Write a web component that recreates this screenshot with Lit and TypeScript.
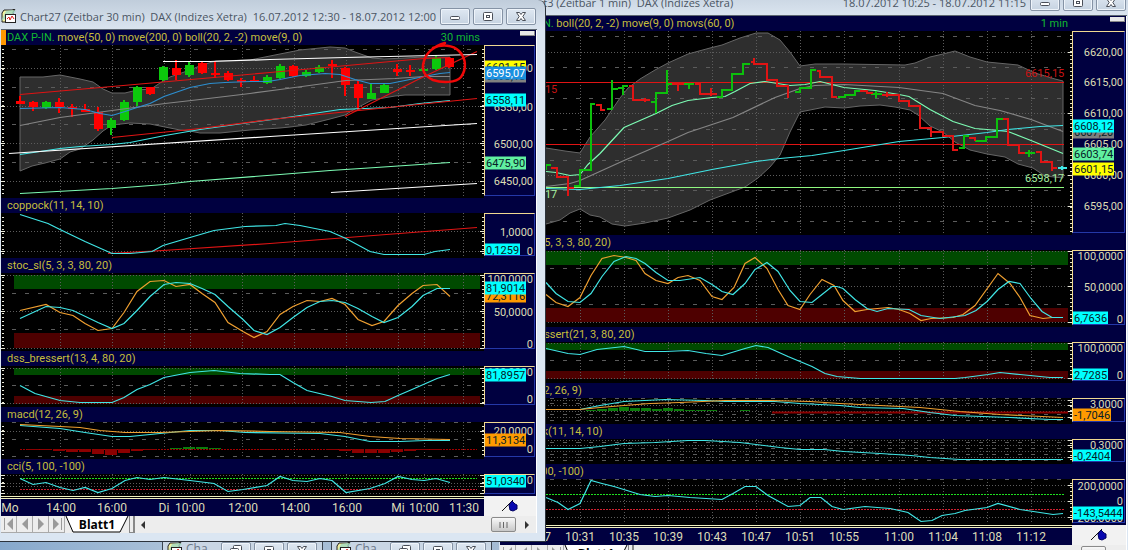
import { LitElement, html, svg, css, nothing } from "lit";
import { customElement, property } from "lit/decorators.js";

interface Line { c: string; p: string; w?: number }
interface Mark { y: number; t: string; c?: string; bg?: string }
interface Panel {
  title: string;
  symbol?: boolean;
  frame?: string;
  top: number;
  height: number;
  dots: number[];
  dashes?: number[];
  bands?: [number, number, string][];
  dotted?: [number, string][];
  area?: string;
  lines: Line[];
  candles?: number[][];
  bars?: Line[];
  hist?: { base: number; w: number; v: [number, number][] };
  rings?: string;
  notes?: { x: number; y: number; t: string; c: string }[];
  marks: Mark[];
}
interface Chart {
  x0: number;
  width: number;
  grid: number[];
  end: number;
  ticks: [number, string][];
  panels: Panel[];
}

const CYAN = "#40e6e6";
const ORANGE = "#f0a030";
const RED = "#e01414";
const GREEN = "#0cc00c";
const GRAY = "#858585";
const MINT = "#7dfcb4";
const TAG_CYAN = "#00ffff";
const TAG_ORANGE = "#ff9a00";

const chart27: Chart = {
  x0: 1,
  width: 483,
  end: 480,
  grid: [60, 112, 164, 190, 242, 294, 346, 398, 424, 463],
  ticks: [[10, "Mo"], [61, "14:00"], [112, "16:00"], [164, "Di"], [190, "10:00"], [243, "12:00"], [295, "14:00"], [347, "16:00"], [398, "Mi"], [424, "10:00"], [464, "11:30"]],
  panels: [
    {
      title: "move(50, 0) move(200, 0) boll(20, 2, -2) move(9, 0)",
      symbol: true,
      frame: "30 mins",
      top: 45,
      height: 153,
      dots: [68, 106, 143, 181],
      dashes: [49, 87, 124, 162],
      area: "20,77 43,77 60,75 80,79 93,82 103,89 112,93 125,93 137,90 151,89 160,83 170,77 190,70 202,65 216,61 250,60 280,54 300,50 330,47 345,48 355,52 372,58 384,59 405,58 424,57 450,57 450,95 420,95 405,95 395,96 372,100 355,109 345,115 330,119 306,125 290,127 280,128 250,130 220,133 200,133 190,131 180,130 165,127 150,124 130,123 112,125 103,131 93,140 80,149 70,152 60,159 45,163 32,166 20,171",
      lines: [
        { c: GRAY, p: "20,125 60,117 112,110 165,103 200,99 250,93 280,89 346,80 395,78 424,76 450,76" },
        { c: "#2d8fd0", p: "20,108 60,107 85,109 100,113 112,115 125,111 137,107 150,103 164,96 190,87 210,83 225,82 250,81 268,81 280,79 300,75 325,73 340,74 355,79 370,83 390,83 405,80 424,76 440,73 450,72" },
        { c: CYAN, p: "20,154 60,148 80,146 112,144 130,142 165,135 200,129 250,122 280,118 340,109 390,107 420,103 450,100" },
        { c: MINT, p: "20,193 112,188 164,184 190,181 280,174 330,170 376,167 450,162" },
        { c: RED, p: "20,94 112,86 270,72 424,58 450,57" },
        { c: RED, p: "112,137 200,128 270,119 477,98" },
        { c: RED, p: "345,116 420,78 477,51" },
        { c: "#fff", p: "163,61 210,61 270,59 345,57 477,54" },
        { c: "#fff", p: "9,153 270,136 477,123" },
        { c: "#fff", p: "331,192 477,183" },
      ],
      candles: [
        [20, 96, 104, 101, 104, 0], [33, 101, 111, 102, 107, 0], [46, 101, 109, 102, 108, 1], [59, 98, 113, 102, 107, 0],
        [72, 104, 117, 107, 109, 0], [85, 104, 112, 109, 112, 0], [98, 107, 131, 112, 129, 0], [111, 118, 135, 120, 128, 1],
        [124, 100, 121, 102, 120, 1], [137, 86, 106, 87, 102, 1], [150, 87, 95, 87, 94, 0], [163, 66, 81, 67, 80, 1],
        [176, 60, 80, 68, 75, 0], [189, 61, 77, 65, 75, 1], [202, 62, 74, 63, 73, 0], [215, 61, 78, 73, 75, 0],
        [228, 71, 81, 73, 80, 0], [241, 78, 87, 80, 82, 0], [254, 76, 82, 80, 82, 0], [267, 75, 84, 77, 83, 1],
        [280, 64, 79, 66, 78, 1], [293, 65, 77, 66, 76, 0], [306, 70, 77, 72, 76, 1], [319, 65, 73, 67, 72, 1],
        [332, 60, 78, 64, 66, 0], [345, 67, 96, 68, 85, 0], [358, 80, 110, 84, 98, 0], [371, 84, 99, 93, 99, 1],
        [384, 84, 93, 85, 93, 1], [397, 64, 76, 69, 72, 0], [410, 65, 76, 70, 72, 0], [423, 67, 71, 69, 71, 1],
        [436, 55, 70, 58, 69, 1], [449, 57, 68, 58, 67, 0],
      ],
      rings: "M445 43 C434 46 426 53 424 61 C421 70 424 76 433 80 C442 83 456 83 461 77 C467 69 466 58 459 51 C453 45 442 44 433 48",
      marks: [
        { y: 68, t: "6600,00" }, { y: 107, t: "6550,00" }, { y: 144, t: "6500,00" }, { y: 181, t: "6450,00" },
        { y: 76, t: "6593,18", bg: "#808080" }, { y: 67, t: "6601,15", bg: "#ffff00" },
        { y: 73, t: "6595,07", bg: "#1a90e0", c: "#fff" }, { y: 100, t: "6558,11", bg: TAG_CYAN }, { y: 163, t: "6475,90", bg: "#60f0a0" },
      ],
    },
    {
      title: "coppock(11, 14, 10)",
      top: 213,
      height: 45,
      dots: [231, 251],
      lines: [
        { c: RED, p: "108,253 163,250 270,243 477,227" },
        { c: CYAN, p: "20,214 48,223 60,229 85,241 112,253 130,253 152,251 163,245 190,237 214,230 245,226 276,225 285,223 300,225 330,231 346,238 370,251 384,254 424,254 435,251 450,249" },
      ],
      marks: [{ y: 232, t: "1,0000" }, { y: 251, t: "0" }, { y: 250, t: "0,1259", bg: TAG_CYAN }],
    },
    {
      title: "stoc_sl(5, 3, 3, 80, 20)",
      top: 273,
      height: 78,
      bands: [[275, 289, "#004a00"], [333, 348, "#4e0000"]],
      dots: [275, 311, 348],
      dashes: [293, 329],
      lines: [
        { c: ORANGE, p: "20,310 46,304 60,312 73,315 85,323 98,330 112,328 124,312 137,291 150,281 164,280 176,286 190,284 202,293 215,302 228,322 243,331 254,337 267,331 280,314 293,306 307,300 320,301 332,298 345,304 358,319 372,325 384,321 398,305 412,293 423,285 437,284 450,296" },
        { c: CYAN, p: "20,318 46,306 60,307 73,310 98,322 112,328 124,323 137,310 150,296 164,284 176,282 190,283 202,288 215,294 228,306 243,319 254,330 267,334 280,327 293,317 307,307 320,301 332,300 345,302 358,308 372,316 384,322 398,317 412,306 423,295 437,288 450,288" },
      ],
      marks: [{ y: 279, t: "100,0000" }, { y: 312, t: "50,0000" }, { y: 344, t: "0" }, { y: 296, t: "72,3116", bg: TAG_ORANGE }, { y: 288, t: "81,9014", bg: TAG_CYAN }],
    },
    {
      title: "dss_bressert(13, 4, 80, 20)",
      top: 366,
      height: 41,
      bands: [[368, 375, "#004a00"], [396, 404, "#4e0000"]],
      dots: [368, 403],
      dashes: [385],
      lines: [{ c: CYAN, p: "20,385 35,393 60,400 80,402 112,402 124,397 137,389 150,384 164,377 190,372 214,370 240,373 270,374 280,374 293,382 307,390 332,396 345,400 371,402 385,401 398,395 412,389 437,378 450,374" }],
      marks: [{ y: 372, t: "100,0000" }, { y: 399, t: "0" }, { y: 375, t: "81,8957", bg: TAG_CYAN }],
    },
    {
      title: "macd(12, 26, 9)",
      top: 422,
      height: 37,
      dots: [431],
      dashes: [422, 439, 456],
      dotted: [[449, "#a00000"]],
      hist: { base: 449, w: 13, v: [[33, 1], [46, 1], [59, 2], [72, 3], [85, 3], [98, 5], [111, 6], [124, 4], [137, 2], [150, 1], [176, -1], [189, -2], [202, -2], [215, -1], [267, 1], [332, 1], [345, 2], [358, 4], [371, 4], [384, 4], [397, 3], [410, 2], [423, 1], [436, 1]] },
      lines: [
        { c: CYAN, p: "20,425 60,428 85,432 112,436 130,436 160,433 190,430 220,430 245,432 320,433 345,436 370,441 400,441 425,440 450,440" },
        { c: ORANGE, p: "20,424 80,427 100,430 125,432 160,432 220,430 270,431 340,432 370,436 400,438 450,439" },
      ],
      marks: [{ y: 431, t: "20,0000" }, { y: 449, t: "0" }, { y: 440, t: "11,3134", bg: TAG_ORANGE }],
    },
    {
      title: "cci(5, 100, -100)",
      top: 474,
      height: 22,
      dots: [475, 483, 486, 493],
      dotted: [[478, "#20e020"], [489, "#d02030"]],
      lines: [{ c: CYAN, p: "20,478 33,484 46,482 60,487 73,490 85,487 98,492 112,488 125,480 137,477 150,479 164,477 190,480 214,483 228,491 243,489 267,485 280,476 293,480 307,481 320,478 332,480 346,492 370,488 385,483 398,476 412,479 424,480 436,478 450,482" }],
      marks: [{ y: 480, t: "0" }, { y: 481, t: "51,0340", bg: TAG_CYAN }],
    },
  ],
};

const chart3: Chart = {
  x0: 500,
  width: 572,
  end: 1068,
  grid: [536, 580, 624, 668, 712, 756, 800, 844, 899, 943, 987, 1031],
  ticks: [[536, "10:27"], [580, "10:31"], [624, "10:35"], [668, "10:39"], [712, "10:43"], [756, "10:47"], [800, "10:51"], [844, "10:55"], [899, "11:00"], [943, "11:04"], [987, "11:08"], [1031, "11:12"]],
  panels: [
    {
      title: "boll(20, 2, -2) move(9, 0) movs(60, 0)",
      symbol: true,
      frame: "1 min",
      top: 31,
      height: 204,
      dots: [52, 113, 175, 206],
      dashes: [36, 67, 98, 129, 160, 190, 221],
      area: "500,150 546,148 565,151 580,153 590,137 605,120 620,98 628,88 640,79 655,70 668,63 688,54 710,48 722,45 740,38 756,33 768,33 780,40 790,52 800,66 815,64 844,64 905,65 915,63 930,57 943,54 955,51 970,57 987,62 1018,65 1035,73 1055,79 1063,81 1063,178 1045,176 1033,168 1018,164 1005,157 987,154 970,150 955,142 943,132 930,126 918,115 910,110 895,107 880,105 860,106 844,108 825,107 810,110 800,112 790,132 780,155 770,167 758,178 745,187 710,200 690,210 668,218 645,223 625,226 612,224 600,217 590,215 580,209 570,213 560,220 546,224 500,226",
      lines: [
        { c: RED, p: "500,82 1064,82" },
        { c: RED, p: "500,144 1064,144" },
        { c: "#90f880", p: "500,187 1064,187" },
        { c: GRAY, p: "546,186 570,183 580,180 624,160 668,141 688,132 733,117 775,97 800,88 815,85 844,84 899,87 943,93 975,105 1000,110 1031,119 1063,131" },
        { c: MINT, p: "546,171 556,172 570,175 580,174 588,164 600,153 612,140 624,127 640,120 656,113 672,105 688,100 712,97 725,96 735,91 750,83 765,81 790,85 805,84 820,81 844,87 875,90 899,94 909,96 930,109 953,121 975,128 987,129 1008,131 1031,140 1063,153" },
        { c: CYAN, p: "546,188 580,189 620,185 668,178 712,169 756,161 780,158 812,155 844,150 899,141 943,137 987,132 1008,129 1040,126 1063,125" },
      ],
      bars: [
        { c: GREEN, p: "M546 170V165H551M574 186H580V170H591V104H595M607 109H612V80M612 89H618M618 88H623M628 86H623V95M651 102H656V113M656 103V93H667V70M667 84H672M684 84H694M689 84V89M717 97H722V90H732V74H743V64H750M795 92H800V88H811V70H816M838 97H845V95H855V91H860M871 94H882M876 91V98M959 148H964V136H969M975 141H986V137H997V119H1003M1025 153H1035M1029 150V157" },
        { c: RED, p: "M551 168H557V177H568V196M568 188H574M596 105H601V110H605M629 86H633V100H650M645 98V102M672 84H684M678 84V91M695 84H700V94H717M711 88V96M751 62H754V58V64H767V80H777V86H788V98M817 71H820V77H832V97H837M860 91H867V93H873M882 95H899V101H909V106H920V128H931V137M887 92V97M931 132H943V136H953V150H958M969 138H975V141M1003 119H1008V145H1019V153H1025M1036 152H1041V162H1052V171M1052 168H1057" },
        { c: CYAN, p: "M1058 168H1067M1062 166V170" },
      ],
      notes: [
        { x: 518, y: 90, t: "6615,15", c: "#c81414" }, { x: 518, y: 195, t: "6598,17", c: "#a8f0a0" },
        { x: 1025, y: 74, t: "6615,15", c: "#c81414" }, { x: 1025, y: 179, t: "6598,17", c: "#a8f0a0" },
      ],
      marks: [
        { y: 52, t: "6620,00" }, { y: 82, t: "6615,00" }, { y: 113, t: "6610,00" }, { y: 144, t: "6605,00" }, { y: 175, t: "6600,00" }, { y: 206, t: "6595,00" },
        { y: 132, t: "6607,20", bg: "#808080" }, { y: 126, t: "6608,12", bg: TAG_CYAN }, { y: 154, t: "6603,74", bg: "#60f0a0" }, { y: 169, t: "6601,15", bg: "#ffff00" },
      ],
    },
    {
      title: "stoc_sl(5, 3, 3, 80, 20)",
      top: 250,
      height: 77,
      bands: [[251, 265, "#004a00"], [308, 322, "#4e0000"]],
      dots: [251, 286, 322],
      dashes: [268, 304],
      lines: [
        { c: ORANGE, p: "546,294 556,302 568,306 580,297 591,275 602,258 614,255 626,257 636,260 645,273 656,280 668,283 678,277 688,275 700,280 712,296 722,299 734,287 745,263 755,257 767,268 778,289 788,305 800,309 810,294 822,279 834,285 843,300 855,311 867,309 888,307 899,309 910,313 921,320 931,318 953,317 963,314 975,305 998,273 1010,283 1020,297 1030,315 1043,318 1052,317 1063,317" },
        { c: CYAN, p: "546,282 556,293 568,301 580,302 591,293 602,276 614,261 626,256 636,258 645,263 656,272 668,280 680,280 700,277 712,284 722,291 733,294 745,283 755,269 767,262 778,271 790,290 800,301 812,302 822,294 832,286 837,286 843,288 855,299 867,308 877,311 888,308 909,309 921,315 940,318 965,315 976,310 987,301 998,289 1009,281 1020,283 1031,298 1042,311 1052,317 1063,317" },
      ],
      marks: [{ y: 256, t: "100,0000" }, { y: 287, t: "50,0000" }, { y: 319, t: "0" }, { y: 318, t: "6,7636", bg: TAG_CYAN }],
    },
    {
      title: "dss_bressert(21, 3, 80, 20)",
      top: 342,
      height: 41,
      bands: [[343, 350, "#004a00"], [371, 379, "#4e0000"]],
      dots: [343, 378],
      dashes: [360],
      lines: [{ c: CYAN, p: "546,348 568,353 580,354 597,349 624,346 645,351 665,351 688,350 706,353 722,355 745,348 756,345 768,347 788,356 812,366 825,373 837,376 860,378 955,378 965,377 988,374 1000,372 1020,374 1050,377 1063,377" }],
      marks: [{ y: 348, t: "100,0000" }, { y: 375, t: "0" }, { y: 375, t: "2,7285", bg: TAG_CYAN }],
    },
    {
      title: "macd(12, 26, 9)",
      top: 398,
      height: 26,
      dots: [400, 405, 411, 417],
      dashes: [398, 403, 414, 420],
      hist: { base: 411, w: 11, v: [[591, -1], [602, -2], [613, -3], [624, -4], [635, -3], [646, -3], [657, -2], [668, -3], [679, -2], [690, -1], [701, -1], [712, -1], [745, -1]] },
      lines: [
        { c: "#8c0000", w: 2, p: "772,412 1068,412" },
        { c: CYAN, p: "546,409 580,409 600,405 624,401 665,399 705,400 725,401 775,401 800,403 840,405 860,407 903,408 930,412 955,415 1010,417 1050,419 1063,419" },
        { c: ORANGE, p: "546,409 580,409 600,407 624,405 650,403 680,402 725,400 770,400 810,401 840,403 880,405 920,407 960,411 1000,414 1063,417" },
      ],
      marks: [{ y: 404, t: "3,0000" }, { y: 415, t: "-1,7046", bg: TAG_ORANGE }],
    },
    {
      title: "coppock(11, 14, 10)",
      top: 439,
      height: 25,
      dots: [440, 445, 451, 457],
      dashes: [442, 448, 454, 460],
      lines: [{ c: CYAN, p: "546,448 580,448 600,446 624,443 655,442 688,440 705,440 740,442 780,447 800,449 824,449 844,451 880,453 911,455 930,457 960,459 1000,459 1063,459" }],
      marks: [{ y: 445, t: "0,3000" }, { y: 456, t: "-0,2404", bg: TAG_CYAN }],
    },
    {
      title: "cci(5, 100, -100)",
      top: 479,
      height: 46,
      dots: [485, 501, 517],
      dashes: [479],
      dotted: [[494, "#20e020"], [509, "#d02030"]],
      lines: [{ c: CYAN, p: "546,497 558,502 568,509 580,503 591,480 602,483 614,486 640,494 655,496 668,495 690,497 722,499 733,493 745,486 756,486 768,495 788,506 800,505 810,497 821,497 832,506 843,509 865,506 890,508 908,512 921,521 932,520 942,515 955,513 965,510 987,507 998,503 1020,509 1040,512 1053,514 1063,513" }],
      marks: [{ y: 486, t: "200,0000" }, { y: 501, t: "0" }, { y: 518, t: "-200,0000" }, { y: 513, t: "-143,5444", bg: TAG_CYAN }],
    },
  ],
};

const chartIcon = svg`
  <svg class="app-icon" width="16" height="16" viewBox="0 0 16 16" aria-hidden="true">
    <path d="M1 13V4l2-3h8l3-1-2 3v10z" fill="#f4f0a0" stroke="#222"/>
    <path d="M0 12 5 2l6-1 4 1-3 3z" fill="#9fd8c0" opacity=".8"/>
    <rect x="4.500" y="5.500" width="10" height="8" fill="#fff" stroke="#222"/>
    <path d="M6 10l2-2 1 3 2-4 2 3" fill="none" stroke="#e02020"/>
  </svg>`;
const minIcon = svg`<svg width="14" height="12" viewBox="0 0 14 12"><rect x="2.500" y="5.500" width="9" height="3" rx="1" fill="#fff" stroke="#4a4f58"/></svg>`;
const maxIcon = svg`<svg width="14" height="12" viewBox="0 0 14 12"><rect x="2.500" y="1.500" width="9" height="8" rx="1" fill="#fff" stroke="#4a4f58"/><rect x="5.500" y="4.500" width="3" height="2" fill="#fff" stroke="#4a4f58"/></svg>`;
const restoreIcon = svg`<svg width="14" height="12" viewBox="0 0 14 12"><rect x="4.500" y="0.500" width="8" height="7" rx="1" fill="#fff" stroke="#4a4f58"/><rect x="1.500" y="3.500" width="8" height="7" rx="1" fill="#fff" stroke="#4a4f58"/><rect x="4.500" y="6.500" width="2" height="1" stroke="#4a4f58"/></svg>`;
const closeIcon = svg`<svg width="14" height="12" viewBox="0 0 14 12"><path d="M2.500 1.500h3L7 3.500l1.500-2h3L8.800 5.500l2.700 4h-3L7 7.500l-1.500 2h-3l2.700-4z" fill="#fff" stroke="#4a4f58"/></svg>`;

const captionStyles = css`
  .title {
    display: flex;
    align-items: center;
    gap: 3px;
    color: #4a5563;
    font: 11px "Open Sans", "Noto Sans", sans-serif;
    white-space: pre;
  }
  .app-icon { flex: none; }
  .caption { flex: 1; min-width: 0; display: flex; justify-content: space-between; padding-right: 1px; }
  .title button {
    flex: none;
    display: grid;
    place-items: center;
    width: 30px;
    height: 17px;
    padding: 0;
    border: 1px solid #8593a5;
    border-radius: 2px;
    background: linear-gradient(#dfe8f2, #c6d3e1);
    box-shadow: inset 0 0 0 1px #eef4fa;
  }
`;

@customElement("chart-panel")
class ChartPanel extends LitElement {
  @property({ attribute: false }) panel!: Panel;
  @property({ attribute: false }) chart!: Chart;

  static styles = css`
    :host { display: block; background: #000040; font: 11px Roboto, "Liberation Sans", sans-serif; }
    .head {
      display: flex;
      height: 15px;
      line-height: 15px;
      white-space: pre;
      color: #c6be3c;
    }
    .chip { width: 5px; background: #ff9800; }
    .name { flex: 1; padding-left: 1px; }
    .head:not(.lead) .name { padding-left: 6px; }
    .symbol, .span { color: #12b830; }
    .span { padding-right: 4px; }
    .side { width: var(--scale); display: flex; justify-content: flex-end; }
    .knob { width: 15px; height: 5px; margin: 1px 1px 0 0; background: #e8e8e8; box-shadow: inset -1px -1px #888; }
    .body { display: flex; }
    .plot { position: relative; flex: 1; min-width: 0; background: #000; }
    .plot svg { display: block; width: 100%; overflow: visible; }
    .note { position: absolute; line-height: 14px; transform: translateY(-50%); }
    .scale {
      position: relative;
      box-sizing: border-box;
      width: calc(var(--scale) - 1px);
      margin: 0 1px 2px 0;
      border: 1px solid #2438a8;
      border-top-color: #f0d890;
      border-left-color: #f0d890;
      overflow: hidden;
      color: #dcdcb4;
    }
    .mark { position: absolute; right: 1px; line-height: 13px; transform: translateY(-50%); }
    .tag { right: auto; left: 0; padding: 0 1px; color: #062028; }
  `;

  render() {
    const p = this.panel, c = this.chart;
    const right = c.x0 + c.width;
    const bottom = p.top + p.height;
    const inner = c.x0 === 1 ? 14 : 546;
    return html`
      <div class="head ${p.symbol ? "lead" : ""}">
        ${p.symbol ? html`<span class="chip"></span>` : nothing}
        <span class="name">${p.symbol ? html`<span class="symbol">DAX P-IN. </span>` : nothing}${p.title}</span>
        ${p.frame ? html`<span class="span">${p.frame}</span>` : nothing}
        <span class="side">${p.frame ? html`<span class="knob"></span>` : nothing}</span>
      </div>
      <div class="body">
        <div class="plot">
          <svg viewBox="${c.x0} ${p.top} ${c.width} ${p.height}" preserveAspectRatio="none" style="height:${p.height}px" fill="none" role="img" aria-label=${p.title}>
            ${p.area ? svg`<polygon points=${p.area} fill="#2e2e2e" stroke="#666"/>` : nothing}
            ${(p.bands ?? []).map(([a, b, f]) => svg`<rect x=${inner} y=${a} width=${c.end - inner} height=${b - a} fill=${f}/>`)}
            <g shape-rendering="crispEdges" stroke="#5c5c5c">
              ${c.grid.map((x) => svg`<path d="M${x + 0.5} ${p.top}V${bottom - 2}" stroke-dasharray="1 2"/>`)}
              ${p.dots.map((y) => svg`<path d="M${c.x0 + 6} ${y + 0.5}H${c.end}" stroke-dasharray="1 2"/>`)}
              ${(p.dashes ?? []).map((y) => svg`<path d="M${c.x0 + 11} ${y + 0.5}H${c.end}" stroke-dasharray="4 9"/>`)}
              ${(p.dotted ?? []).map(([y, s]) => svg`<path d="M${c.x0 + 19} ${y + 0.5}H${c.end - 3}" stroke=${s} stroke-dasharray="2 1"/>`)}
            </g>
            <g shape-rendering="crispEdges" stroke="#e8e8d8">
              <path d="M${c.x0 + 2} ${p.top + 4}V${bottom - 2}M${right - 1} ${p.top + 4}V${bottom - 2}" stroke-width="2" stroke-dasharray="1 3"/>
              ${p.dots.map((y) => svg`<path d="M${c.x0} ${y + 0.5}h4M${right - 4} ${y + 0.5}h4"/>`)}
            </g>
            ${p.hist ? svg`<g shape-rendering="crispEdges">${p.hist.v.map(([x, h]) => svg`<rect x=${x - p.hist!.w / 2 + 0.5} y=${Math.min(p.hist!.base, p.hist!.base + h)} width=${p.hist!.w - 1} height=${Math.abs(h)} fill=${h > 0 ? "#8c0000" : "#0c7c0c"}/>`)}</g>` : nothing}
            ${(p.candles ?? []).map(([x, hi, lo, a, b, up]) => svg`<g shape-rendering="crispEdges" fill=${up ? "#0cc80c" : "#ff0000"}>
              <rect x=${x - 1} y=${hi} width="2" height=${lo - hi}/><rect x=${x - 4} y=${a} width="9" height=${b - a}/></g>`)}
            ${p.lines.map((l) => svg`<polyline points=${l.p} stroke=${l.c} stroke-width=${l.w ?? 1.2} transform="translate(0 .5)"/>`)}
            ${(p.bars ?? []).map((b) => svg`<path d=${b.p} stroke=${b.c} stroke-width="2" shape-rendering="crispEdges"/>`)}
            ${p.rings ? svg`<path d=${p.rings} stroke="#f00808" stroke-width="2.500" stroke-linecap="round"/>` : nothing}
          </svg>
          ${(p.notes ?? []).map((n) => html`<span class="note" style="left:${((n.x - c.x0) / c.width) * 100}%;top:${n.y - p.top}px;color:${n.c}">${n.t}</span>`)}
        </div>
        <div class="scale">
          ${p.marks.map((m) => html`<span class="mark ${m.bg ? "tag" : ""}" style="top:${m.y - p.top - 1}px;background:${m.bg ?? "none"};color:${m.c ?? ""}">${m.t}</span>`)}
        </div>
      </div>`;
  }
}

@customElement("chart-window")
class ChartWindow extends LitElement {
  @property() name = "";
  @property() span = "";
  @property({ attribute: false }) chart!: Chart;

  static styles = [captionStyles, css`
    :host {
      display: flex;
      flex-direction: column;
      box-sizing: border-box;
      padding: 0 8px 8px 1px;
      border-right: 1px solid #2c333c;
      border-bottom: 1px solid #2c333c;
      border-radius: 0 8px 0 0;
      background: linear-gradient(#c0cddb, #dbe5f0 30px, #dbe6f2);
    }
    .title { height: 30px; padding: 3px 1px 0 0; box-sizing: border-box; }
    .sheet { border-right: 1px solid #fff; box-shadow: 0 -1px #5c6670; background: #000040; }
    .axis { display: flex; height: 20px; background: #000040; }
    .times {
      position: relative;
      flex: 1;
      border-top: 1px solid #f0f0c0;
      box-shadow: inset 0 1px #000, inset 0 2px #f0f0c0;
      color: #dcdcb8;
      font: 12px Roboto, sans-serif;
      overflow: hidden;
    }
    .time { position: absolute; top: 3px; line-height: 16px; transform: translateX(-50%); }
    .pin { width: var(--scale); display: grid; place-items: center; background: #f2f2f2; }
    .tabs { display: flex; height: 17px; background: #ededed; }
    .tabs button { border: 0; padding: 0; background: none; }
    .tabs .nav { display: grid; place-items: center; width: 16px; border-right: 1px solid #aaa; border-bottom: 1px solid #aaa; }
    .tabs .tab {
      position: relative;
      display: grid;
      place-items: center;
      width: 64px;
      font: bold 12px "Open Sans", sans-serif;
      color: #000;
    }
    .tab svg { position: absolute; inset: 0; }
    .tab span { position: relative; line-height: 16px; }
    .split { width: 3px; border: solid #888; border-width: 0 2px 1px 1px; }
    .scroll { flex: 1; display: flex; align-items: center; justify-content: space-between; padding: 0 7px 0 6px; }
    .end { display: flex; align-items: center; gap: 8px; }
    .tabs .thumb { display: grid; place-items: center; width: 25px; height: 15px; border: 1px solid #8a8a8a; border-radius: 2px; background: linear-gradient(#f8f8f8, #c8c8c8); }
  `];

  render() {
    const c = this.chart;
    const nav = (d: string, label: string) => html`<button class="nav" aria-label=${label}><svg width="14" height="14" viewBox="0 0 14 14"><path d=${d} fill="#9a9a9a"/></svg></button>`;
    return html`
      <header class="title">
        ${chartIcon}
        <span class="caption"><span>${this.name}</span><span>${this.span}</span></span>
        <button aria-label="Minimieren">${minIcon}</button>
        <button aria-label="Maximieren">${maxIcon}</button>
        <button aria-label="Schließen">${closeIcon}</button>
      </header>
      <div class="sheet">
        ${c.panels.map((p) => html`<chart-panel .panel=${p} .chart=${c}></chart-panel>`)}
        <div class="axis">
          <div class="times">
            ${c.ticks.map(([x, t]) => html`<span class="time" style="left:${((x - c.x0) / c.width) * 100}%">${t}</span>`)}
          </div>
          <div class="pin"><svg width="20" height="18" viewBox="0 0 20 18"><path d="M2 14 13 3" stroke="#111"/><path d="M9 8l3-4 3 3 2 1v4l-4 2-3-1z" fill="#0808b0" stroke="#000060"/></svg></div>
        </div>
        <nav class="tabs">
          ${nav("M2 1h1v12H2zM11 1v12L5 7z", "Anfang")}
          ${nav("M10 1v12L4 7z", "Zurück")}
          ${nav("M4 1v12l6-6z", "Weiter")}
          ${nav("M3 1v12l6-6zM11 1h1v12h-1z", "Ende")}
          <button class="tab"><svg width="64" height="17" viewBox="0 0 64 17"><path d="M1 0 8 16H55L63 0" fill="#fff" stroke="#000"/></svg><span>Blatt1</span></button>
          <span class="split"></span>
          <div class="scroll">
            <svg width="5" height="8" viewBox="0 0 5 8"><path d="M4 0v8L0 4z" fill="#333"/></svg>
            <span class="end">
              <button class="thumb" aria-label="Bildlauf"><svg width="9" height="8" viewBox="0 0 9 8"><path d="M1 1v6M4.500 1v6M8 1v6" stroke="#666"/></svg></button>
              <svg width="5" height="8" viewBox="0 0 5 8"><path d="M1 0v8l4-4z" fill="#333"/></svg>
            </span>
          </div>
        </nav>
      </div>`;
  }
}

@customElement("app-root")
class AppRoot extends LitElement {
  static styles = [captionStyles, css`
    :host {
      display: block;
      position: relative;
      height: 100vh;
      overflow: hidden;
      background: linear-gradient(90deg, #86a8cc, #a9c0d8 160px, #9cb4cc);
    }
    chart-window { position: absolute; --scale: 52px; }
    .rear { left: 499px; right: -8px; top: -14px; --scale: 54px; }
    .front { left: 0; top: 0; width: 546px; }
    .dock { position: absolute; left: 162px; top: 541px; display: flex; gap: 8px; }
    .mini {
      box-sizing: border-box;
      width: 161px;
      height: 26px;
      align-items: flex-start;
      padding: 0 5px 0 4px;
      border: 1px solid #3c4652;
      background: #c9d6e4;
      font-size: 12px;
      color: #6c7888;
    }
    .mini .caption { line-height: 14px; }
  `];

  render() {
    const mini = html`
      <div class="title mini">
        ${chartIcon}<span class="caption">Cha</span>
        <button aria-label="Wiederherstellen">${restoreIcon}</button>
        <button aria-label="Maximieren">${maxIcon}</button>
        <button aria-label="Schließen">${closeIcon}</button>
      </div>`;
    return html`
      <div class="dock">${mini}${mini}</div>
      <chart-window class="rear" name="Chart3 (Zeitbar 1 min)  DAX (Indizes Xetra)" span="18.07.2012 10:25 - 18.07.2012 11:15" .chart=${chart3}></chart-window>
      <chart-window class="front" name="Chart27 (Zeitbar 30 min)  DAX (Indizes Xetra)" span="16.07.2012 12:30 - 18.07.2012 12:00" .chart=${chart27}></chart-window>`;
  }
}
